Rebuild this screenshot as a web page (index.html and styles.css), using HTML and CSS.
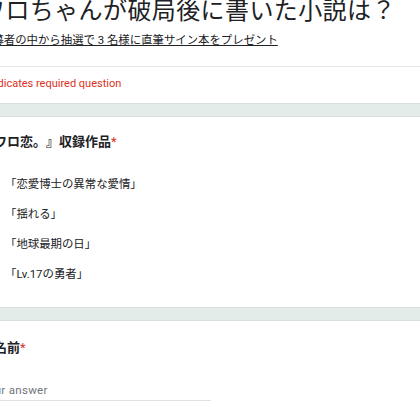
FILE: index.html
```html
<!DOCTYPE html>
<html lang="ja">
<head>
<meta charset="utf-8">
<title>Form</title>
<link rel="stylesheet" href="styles.css">
</head>
<body>
<main class="form">
  <section class="card header">
    <h1 class="title">ワロちゃんが破局後に書いた小説は？</h1>
    <p class="desc"><span class="link">応募者の中から抽選で 3 名様に直筆サイン本をプレゼント</span></p>
    <p class="req">* Indicates required question</p>
  </section>
  <section class="card question">
    <h2 class="qtitle">『ワロ恋。』収録作品<span class="ast">*</span></h2>
    <ul class="options">
      <li class="option"><span class="radio"></span><span class="label">「恋愛博士の異常な愛情」</span></li>
      <li class="option"><span class="radio"></span><span class="label">「揺れる」</span></li>
      <li class="option"><span class="radio"></span><span class="label">「地球最期の日」</span></li>
      <li class="option"><span class="radio"></span><span class="label">「Lv.17の勇者」</span></li>
    </ul>
  </section>
  <section class="card question last">
    <h2 class="qtitle">お名前<span class="ast">*</span></h2>
    <div class="answer">Your answer</div>
  </section>
</main>
</body>
</html>
```
FILE: styles.css
```css
html, body {
  margin: 0;
  padding: 0;
}
body {
  width: 420px;
  height: 420px;
  overflow: hidden;
  background: #e4ecea;
  font-family: Roboto, "Noto Sans CJK JP", sans-serif;
  color: #202124;
  text-spacing-trim: space-all;
}
.form {
  width: 640px;
  margin: -6px 0 0 -44px;
  display: flex;
  flex-direction: column;
  gap: 12px;
}
.card {
  background: #fff;
  border: 1px solid #d9e1df;
  border-radius: 8px;
  padding: 0 24px;
}
.title {
  margin: 0;
  font-size: 24px;
  line-height: 32px;
  font-weight: 400;
  letter-spacing: 0.4px;
}
.desc {
  margin: 5px 0 0;
  font-size: 11.4px;
  line-height: 16px;
}
.link {
  text-decoration: underline;
}
.req {
  margin: 18px -24px 0;
  padding: 8px 24px 10px;
  border-top: 1px solid #e4e6e8;
  font-size: 11px;
  line-height: 18px;
  color: #d93025;
}
.question {
  padding-top: 15px;
  padding-bottom: 19px;
}
.qtitle {
  margin: 0;
  font-size: 13px;
  line-height: 20px;
  font-weight: 700;
}
.ast {
  color: #d93025;
  margin-left: 0;
  font-weight: 400;
}
.options {
  list-style: none;
  margin: 16px 0 0;
  padding: 0;
}
.option {
  display: flex;
  align-items: center;
  height: 30px;
  font-size: 11.4px;
}
.radio {
  width: 16px;
  height: 16px;
  border: 2px solid #5f6368;
  border-radius: 50%;
  box-sizing: border-box;
  margin-right: 8px;
  flex: none;
}
.last {
  padding-top: 17px;
  padding-bottom: 40px;
}
.answer {
  margin-top: 22px;
  width: 230px;
  font-size: 11.5px;
  line-height: 20px;
  color: #70757a;
  border-bottom: 1px solid #e0e2e4;
  letter-spacing: 0.3px;
}
```
